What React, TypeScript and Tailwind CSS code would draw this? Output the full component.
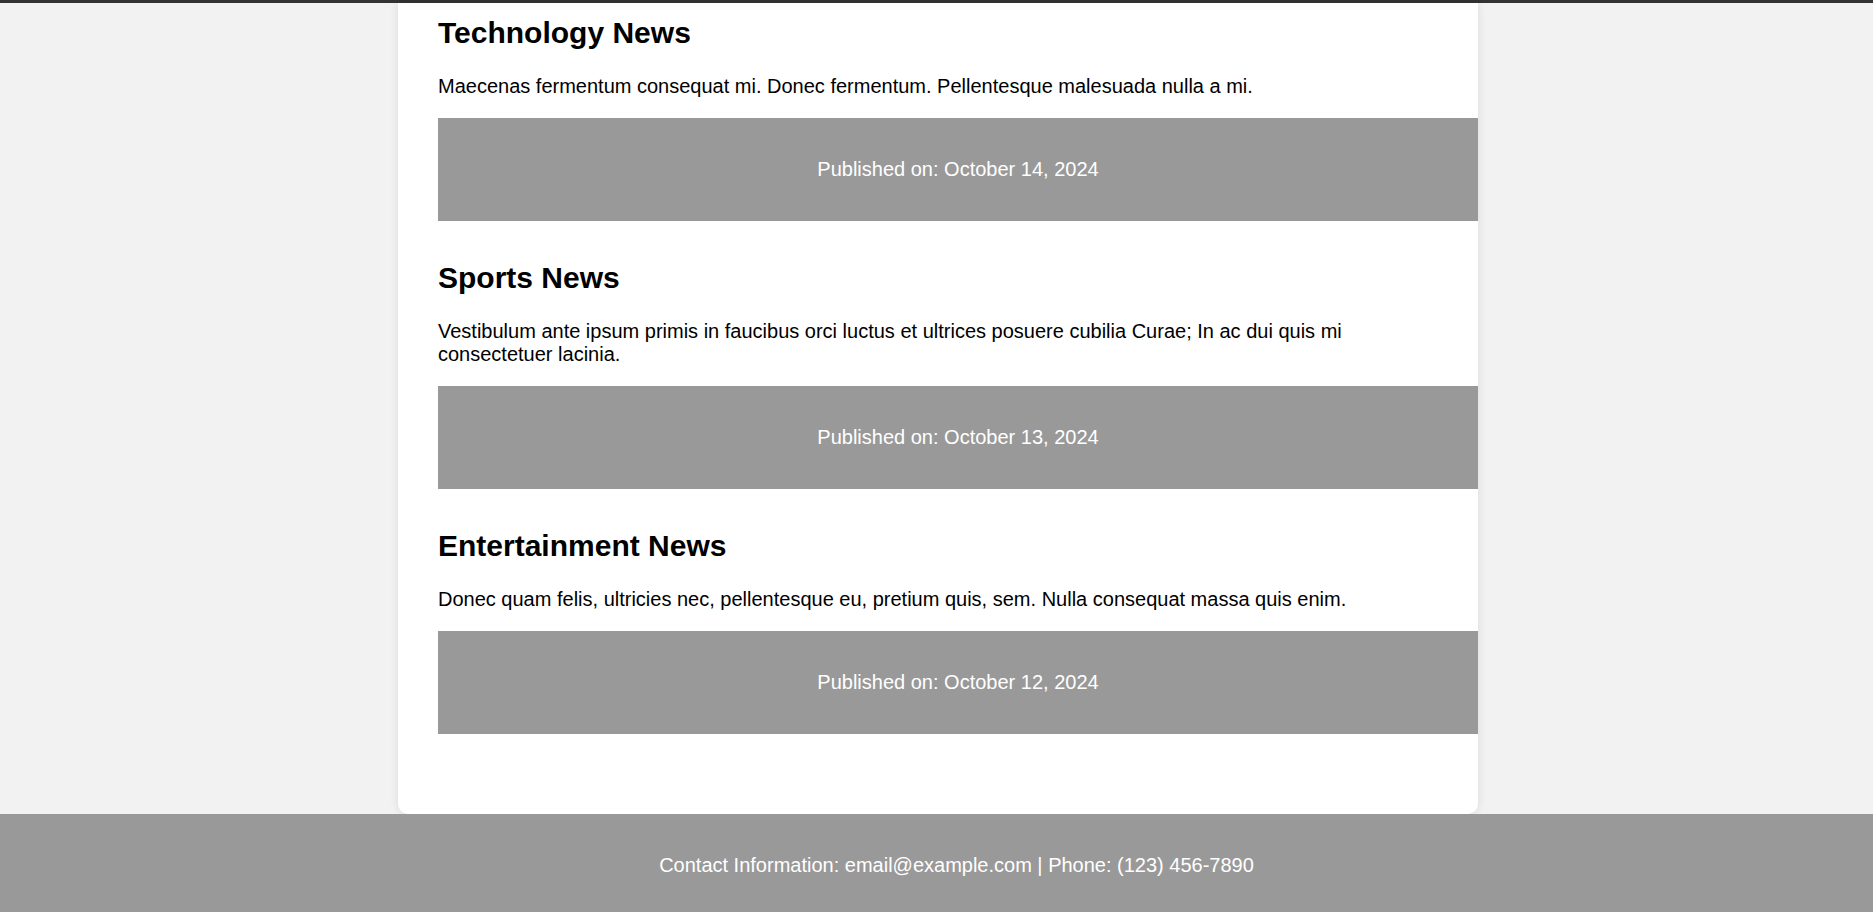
const articles = [
  {
    title: 'Technology News',
    body: 'Maecenas fermentum consequat mi. Donec fermentum. Pellentesque malesuada nulla a mi.',
    date: 'October 14, 2024',
  },
  {
    title: 'Sports News',
    body: 'Vestibulum ante ipsum primis in faucibus orci luctus et ultrices posuere cubilia Curae; In ac dui quis mi consectetuer lacinia.',
    date: 'October 13, 2024',
  },
  {
    title: 'Entertainment News',
    body: 'Donec quam felis, ultricies nec, pellentesque eu, pretium quis, sem. Nulla consequat massa quis enim.',
    date: 'October 12, 2024',
  },
];

export default function App() {
  return (
    <div className="min-h-screen flex flex-col bg-[#f2f2f2] text-black font-['Liberation_Sans',Arial,sans-serif]">
      <div className="h-[3px] bg-[#333333]" />

      <main className="flex justify-center pl-[3px]">
        <div className="w-[1080px] bg-white rounded-b-[10px] shadow-[0_0_10px_rgba(0,0,0,0.1)] pl-10 pr-10 pt-[13px] pb-10">
          {articles.map((article) => (
            <article key={article.title} className="mb-10">
              <h2 className="text-[30px] font-bold leading-[normal] mb-[25px]">{article.title}</h2>
              <p className="text-[20px] leading-[normal] mb-5">{article.body}</p>
              <div className="-mr-10 bg-[#999999] px-5 py-10 text-center text-white text-[20px] leading-[normal]">
                Published on: {article.date}
              </div>
            </article>
          ))}
        </div>
      </main>

      {/* footer text sits a bit right of the viewport centre, like the cards */}
      <footer className="bg-[#999999] pl-10 py-10 text-center text-white text-[20px] leading-[normal]">
        Contact Information: email@example.com | Phone: (123) 456-7890
      </footer>
    </div>
  );
}
